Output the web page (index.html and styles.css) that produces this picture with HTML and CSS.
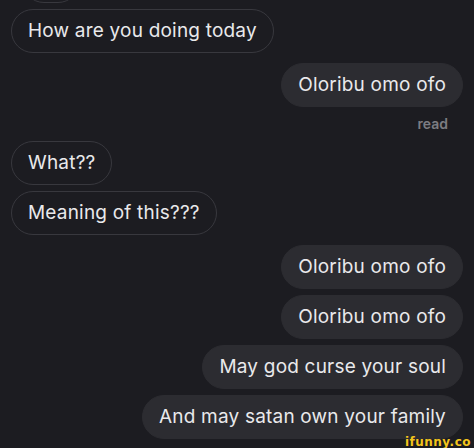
FILE: index.html
```html
<!DOCTYPE html>
<html lang="en">
<head>
    <meta charset="UTF-8">
    <meta name="viewport" content="width=device-width, initial-scale=1.0">
    <title>Messages</title>
    <link rel="stylesheet" href="styles.css">
</head>
<body>
    <div class="chat">
        <div class="msg msg-in msg-cut"></div>
        <div class="msg msg-in">How are you doing today</div>
        <div class="msg msg-out gap-big">Oloribu omo ofo</div>
        <div class="receipt">read</div>
        <div class="msg msg-in">What??</div>
        <div class="msg msg-in">Meaning of this???</div>
        <div class="msg msg-out gap-big">Oloribu omo ofo</div>
        <div class="msg msg-out">Oloribu omo ofo</div>
        <div class="msg msg-out">May god curse your soul</div>
        <div class="msg msg-out">And may satan own your family</div>
    </div>
    <div class="watermark">ifunny.co</div>
</body>
</html>
```

FILE: styles.css
```css
body {
    margin: 0;
    padding: 0;
    width: 474px;
    height: 448px;
    overflow: hidden;
    background-color: #1c1c21;
    color: #e9e9eb;
    font-family: Inter, "Noto Sans", sans-serif;
    position: relative;
}

.chat {
    display: flex;
    flex-direction: column;
    padding: 0 11px;
}

.msg {
    box-sizing: border-box;
    height: 44px;
    line-height: 42px;
    padding: 0 16px;
    border-radius: 22px;
    font-size: 19px;
    letter-spacing: 0.2px;
    white-space: nowrap;
    margin-top: 6px;
}

.msg-in {
    align-self: flex-start;
    border: 1px solid #38383e;
}

.msg-out {
    align-self: flex-end;
    background-color: #2c2c31;
    border: 1px solid #2c2c31;
}

.msg-cut {
    width: 58px;
    margin-top: -41px;
    margin-left: 11px;
}

.gap-big {
    margin-top: 10px;
}

.receipt {
    align-self: flex-end;
    margin: 8px 15px 2px 0;
    font-size: 14px;
    font-weight: 600;
    line-height: 18px;
    color: #7c7c82;
}

.watermark {
    position: absolute;
    right: 3px;
    bottom: 0;
    font-family: "DejaVu Sans", sans-serif;
    font-weight: bold;
    font-size: 12px;
    line-height: 12px;
    color: #f4c51c;
    letter-spacing: 0.5px;
}
```
